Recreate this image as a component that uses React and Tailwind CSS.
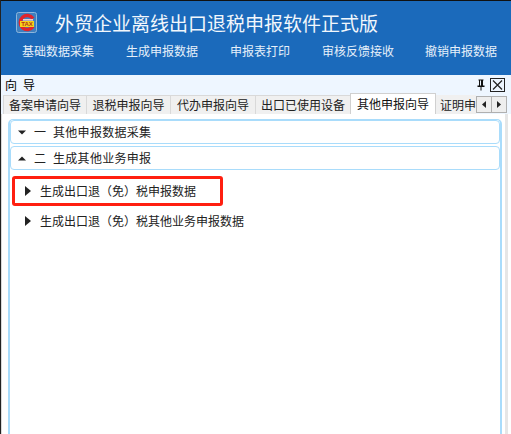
import React from "react";

const tabs = [
  { label: "备案申请向导", w: "w-[83px]" },
  { label: "退税申报向导", w: "w-[84px]" },
  { label: "代办申报向导", w: "w-[85px]" },
  { label: "出口已使用设备", w: "w-[95px]" },
];
const font = { fontFamily: '"Noto Sans CJK SC", sans-serif' };

const Logo = () => (
  <svg width="21" height="21" viewBox="0 0 21 21" className="shrink-0">
    <rect x="0.5" y="0.5" width="20" height="20" rx="2" fill="#3f80bf" stroke="#8db6dc" />
    <path d="M17 14.5A7 7 0 1 1 17 6.5" fill="none" stroke="#e3242b" strokeWidth="3.4" />
    <rect x="7" y="7" width="10" height="1.6" fill="#f3c9c9" />
    <rect x="4" y="9" width="14" height="6" fill="#f6d21a" />
    <text x="11" y="14.4" textAnchor="middle" fontSize="6" fontWeight="700" fill="#b0341a" fontFamily="Liberation Sans">TAX</text>
  </svg>
);

const Caret = ({ up }) => (
  <svg width="8" height="5" viewBox="0 0 8 5" className="shrink-0">
    <path d={up ? "M4 0.5 8 4.5H0Z" : "M0 0.5H8L4 4.5Z"} fill="#222" />
  </svg>
);

const Arrow = () => (
  <svg width="6" height="10" viewBox="0 0 6 10" className="shrink-0">
    <path d="M0 0 6 5 0 10Z" fill="#222" />
  </svg>
);

const Section = ({ up, num, title }) => (
  <div className="h-[24px] flex items-center pl-[7px] border border-[#a9dcfb] rounded-[4px] bg-white text-[12px] text-[#222]">
    <Caret up={up} />
    <span className="ml-[8px] w-[19px]">{num}</span>
    <span className="tracking-[0.3px]">{title}</span>
  </div>
);

const App = () => {
  return (
    <div className="w-[511px] h-[434px] overflow-hidden bg-white flex flex-col border-l border-[#222]" style={font}>
      <div className="h-[75px] shrink-0 bg-[#1b6abb] border-t border-[#111] text-white">
        <div className="flex items-center h-[39px] pt-[3px] pl-[15px]">
          <Logo />
          <span className="ml-[18px] text-[19px] leading-none text-[#f2f7fc]">外贸企业离线出口退税申报软件正式版</span>
        </div>
        <div className="flex text-[12px] leading-none mt-[5px] text-[#e6f0fa]">
          <span className="ml-[21px]">基础数据采集</span>
          <span className="ml-[32px]">生成申报数据</span>
          <span className="ml-[32px]">申报表打印</span>
          <span className="ml-[32px]">审核反馈接收</span>
          <span className="ml-[31px]">撤销申报数据</span>
        </div>
      </div>

      <div className="h-[19px] shrink-0 bg-[#eef6ff] flex items-center pl-[4px] pr-[6px] text-[12px] text-black">
        <span className="tracking-[6px]">向导</span>
        <svg width="8" height="12" viewBox="0 0 8 12" className="ml-auto mr-[5px]">
          <path d="M1.5 0.5h5v1h-.5v5h1.5v1.5h-3v3.5h-1v-3.5h-3v-1.5H2v-5h-.5Z M3 1.5v5h1v-5Z" fill="#111" fillRule="evenodd" />
        </svg>
        <svg width="15" height="14" viewBox="0 0 15 14">
          <rect x="0.5" y="0.5" width="14" height="13" fill="none" stroke="#222" />
          <path d="M3 2.5 12 11.5M12 2.5 3 11.5" stroke="#222" strokeWidth="1.2" />
        </svg>
      </div>

      <div className="h-[20px] shrink-0 bg-[#eef6ff] flex items-end pl-[2px] text-[12px] text-[#222]">
        {tabs.map((tab) => (
          <div
            key={tab.label}
            className={`${tab.w} h-[19px] flex items-center justify-center bg-[#f0f0f0] border-t border-l border-[#d9d9d9]`}
          >
            {tab.label}
          </div>
        ))}
        <div className="w-[86px] h-[21px] -mt-[1px] flex items-center justify-center bg-white border-t border-x border-[#d0d0d0] text-[#111]">
          其他申报向导
        </div>
        <div className="w-[40px] h-[19px] overflow-hidden whitespace-nowrap flex items-center pl-[4px] bg-[#f0f0f0]">
          证明申报向导
        </div>
        <div className="flex h-[17px] mb-[1px]">
          <div className="w-[16px] flex items-center justify-center bg-[#eeeeee] border border-[#b0b0b0]">
            <svg width="4" height="7" viewBox="0 0 4 7"><path d="M4 0v7L0 3.5Z" fill="#222" /></svg>
          </div>
          <div className="w-[16px] -ml-[1px] flex items-center justify-center bg-[#eeeeee] border border-[#b0b0b0]">
            <svg width="4" height="7" viewBox="0 0 4 7"><path d="M0 0v7l4-3.5Z" fill="#222" /></svg>
          </div>
        </div>
      </div>

      <div className="flex-1 min-h-0 mr-[3px] border-l border-r-[3px] border-l-[#d9d9d9] border-r-[#e6e6e6] bg-white pl-[6px] pr-[3px] pt-[5px]">
        <div className="h-[400px] border-x-2 border-t border-[#a9dcfb] rounded-t-[5px] flex flex-col gap-[2px]">
          <Section num="一" title="其他申报数据采集" />
          <Section up num="二" title="生成其他业务申报" />
          <div className="mt-[4px] ml-[2px] w-[211px] h-[30px] shrink-0 flex items-center pl-[10px] border-[3px] border-[#ff1f10] rounded-[3px] text-[12px] text-[#222]">
            <Arrow />
            <span className="ml-[9px]">生成出口退（免）税申报数据</span>
          </div>
          <div className="mt-[1px] ml-[15px] h-[24px] shrink-0 flex items-center text-[12px] text-[#222]">
            <Arrow />
            <span className="ml-[9px]">生成出口退（免）税其他业务申报数据</span>
          </div>
        </div>
      </div>
    </div>
  );
};

export default App;
